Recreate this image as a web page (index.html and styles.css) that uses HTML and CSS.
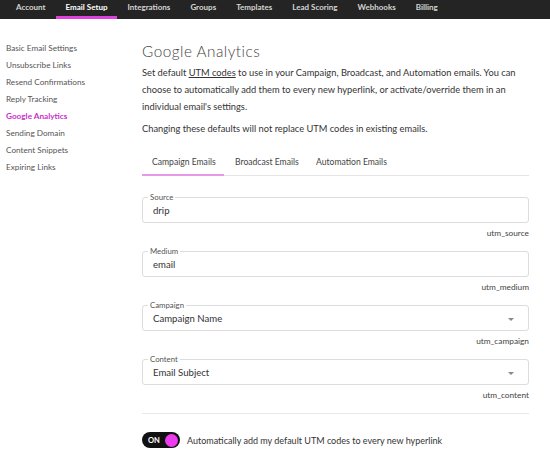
FILE: index.html
```html
<!DOCTYPE html>
<html>
<head>
<meta charset="utf-8">
<link rel="stylesheet" href="styles.css">
</head>
<body>
<nav class="topnav">
  <a class="nav-item">Account</a>
  <a class="nav-item active">Email Setup</a>
  <a class="nav-item">Integrations</a>
  <a class="nav-item">Groups</a>
  <a class="nav-item">Templates</a>
  <a class="nav-item">Lead Scoring</a>
  <a class="nav-item">Webhooks</a>
  <a class="nav-item">Billing</a>
</nav>
<div class="page">
  <aside class="sidebar">
    <a class="side-item">Basic Email Settings</a>
    <a class="side-item">Unsubscribe Links</a>
    <a class="side-item">Resend Confirmations</a>
    <a class="side-item">Reply Tracking</a>
    <a class="side-item current">Google Analytics</a>
    <a class="side-item">Sending Domain</a>
    <a class="side-item">Content Snippets</a>
    <a class="side-item">Expiring Links</a>
  </aside>
  <main class="content">
    <h1 class="title">Google Analytics</h1>
    <p class="desc">Set default <span class="ul">UTM codes</span> to use in your Campaign, Broadcast, and Automation emails. You can choose to automatically add them to every new hyperlink, or activate/override them in an individual email's settings.</p>
    <p class="desc note">Changing these defaults will not replace UTM codes in existing emails.</p>
    <div class="tabs">
      <div class="tab tab-campaign active">Campaign Emails</div>
      <div class="tab tab-broadcast">Broadcast Emails</div>
      <div class="tab tab-automation">Automation Emails</div>
    </div>
    <div class="fields">
      <div class="field">
        <div class="box"><span class="label">Source</span><span class="value">drip</span></div>
        <div class="hint">utm_source</div>
      </div>
      <div class="field">
        <div class="box"><span class="label">Medium</span><span class="value">email</span></div>
        <div class="hint">utm_medium</div>
      </div>
      <div class="field">
        <div class="box select"><span class="label">Campaign</span><span class="value">Campaign Name</span><span class="caret"></span></div>
        <div class="hint">utm_campaign</div>
      </div>
      <div class="field">
        <div class="box select"><span class="label">Content</span><span class="value">Email Subject</span><span class="caret"></span></div>
        <div class="hint">utm_content</div>
      </div>
    </div>
    <div class="toggle-row">
      <span class="toggle"><span class="toggle-text">ON</span><span class="knob"></span></span>
      <span class="toggle-label">Automatically add my default UTM codes to every new hyperlink</span>
    </div>
  </main>
</div>
</body>
</html>
```

FILE: styles.css
```css
* { box-sizing: border-box; }
html, body { margin: 0; padding: 0; background: #fff; }
body {
  font-family: Lato, "Liberation Sans", sans-serif;
  color: #3a3a3a;
  width: 550px;
  height: 449px;
  overflow: hidden;
}
.topnav {
  display: flex;
  height: 19px;
  background: #242424;
  padding-left: 16px;
}
.nav-item {
  display: block;
  color: #d4d4d4;
  font-size: 8px;
  font-weight: 700;
  line-height: 15px;
  padding: 0 10px;
  white-space: nowrap;
}
.nav-item:first-child { padding-left: 0; }
.nav-item.active {
  color: #fff;
  border-bottom: 3px solid #e040e0;
}
.page {
  display: flex;
}
.sidebar {
  width: 142px;
  padding: 21px 0 0 6px;
  display: flex;
  flex-direction: column;
}
.side-item {
  font-size: 8.2px;
  line-height: 17px;
  color: #555;
  white-space: nowrap;
}
.side-item.current {
  color: #c930c9;
  font-weight: 700;
}
.content {
  width: 387px;
  padding-top: 22px;
}
.title {
  margin: 0;
  font-size: 15.3px;
  font-weight: 300;
  letter-spacing: 0.5px;
  color: #444;
  line-height: 20px;
}
.desc {
  margin: 3px 0 0;
  font-size: 9.3px;
  line-height: 17px;
  color: #333;
}
.desc.note { margin-top: 5px; }
.ul { text-decoration: underline; }
.tabs {
  display: flex;
  margin-top: 14px;
  border-bottom: 1px solid #e4e4e4;
  height: 25px;
}
.tab {
  font-size: 8.6px;
  line-height: 22px;
  color: #444;
  white-space: nowrap;
}
.tab-campaign { width: 82px; padding-left: 10px; }
.tab-broadcast { width: 92px; padding-left: 11px; }
.tab-automation { padding-left: 0; }
.tab.active {
  border-bottom: 2px solid #e59ae8;
  margin-bottom: -1px;
}
.fields {
  margin-top: 21px;
}
.field { margin-bottom: 12px; }
.box {
  position: relative;
  height: 26px;
  border: 1px solid #dcdcdc;
  border-radius: 3px;
  display: flex;
  align-items: center;
  padding-left: 10px;
}
.label {
  position: absolute;
  top: -6px;
  left: 5px;
  background: #fff;
  padding: 0 2px;
  font-size: 7.8px;
  line-height: 10px;
  color: #555;
}
.value {
  font-size: 9.6px;
  color: #333;
  padding-top: 1px;
}
.caret {
  position: absolute;
  right: 14px;
  top: 12px;
  width: 0;
  height: 0;
  border-left: 3px solid transparent;
  border-right: 3px solid transparent;
  border-top: 3px solid #888;
}
.hint {
  text-align: right;
  font-size: 8.3px;
  line-height: 12px;
  margin-top: 4px;
  color: #444;
}
.toggle-row {
  border-top: 1px solid #e8e8e8;
  margin-top: 7px;
  padding-top: 18px;
  display: flex;
  align-items: center;
  gap: 7px;
}
.toggle {
  display: flex;
  align-items: center;
  justify-content: space-between;
  width: 38px;
  height: 16px;
  background: #111;
  border-radius: 8px;
  padding: 0 2px 0 6px;
}
.toggle-text {
  color: #fff;
  font-size: 7.5px;
  font-weight: 700;
}
.knob {
  width: 13px;
  height: 13px;
  border-radius: 50%;
  background: #ec3ced;
}
.toggle-label {
  font-size: 9px;
  color: #333;
}
```
